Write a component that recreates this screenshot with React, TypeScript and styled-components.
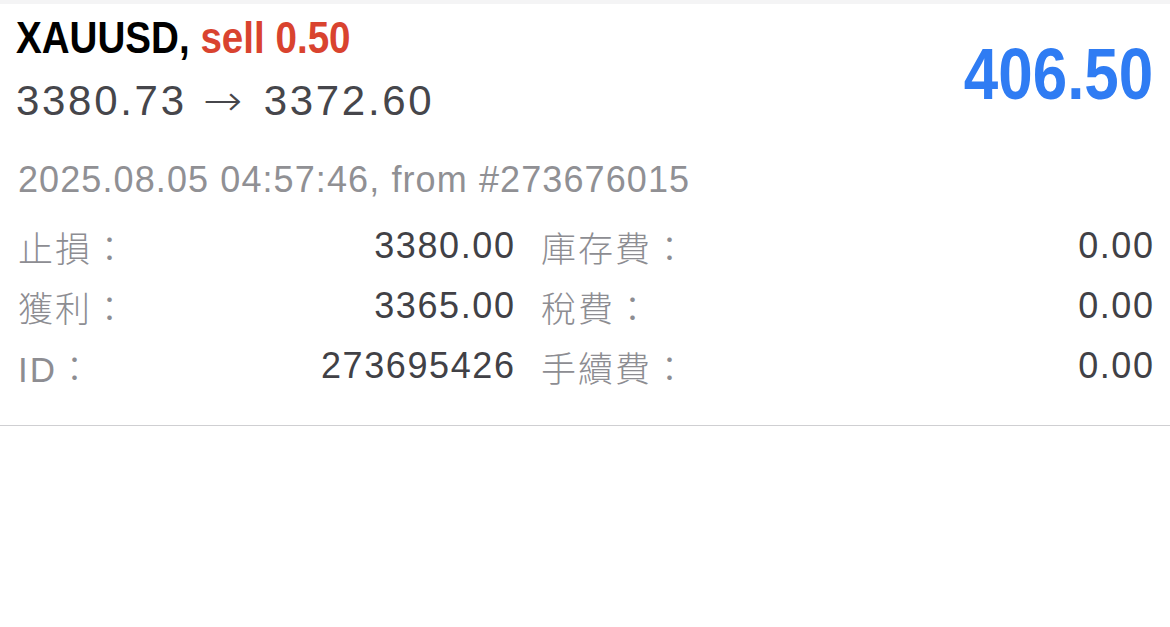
import React from 'react';
import styled, { createGlobalStyle } from 'styled-components';

const GlobalStyle = createGlobalStyle`
  html, body {
    margin: 0;
    padding: 0;
    background: #ffffff;
  }
  body {
    font-family: "Liberation Sans", Arial, "Noto Sans CJK TC", sans-serif;
    -webkit-font-smoothing: antialiased;
  }
`;

const TopStrip = styled.div`
  height: 4px;
  background: #f4f4f5;
`;

const Card = styled.div`
  padding: 0 17px 0 16px;
  border-bottom: 1px solid #cfcfd2;
`;

const Header = styled.div`
  display: flex;
  justify-content: space-between;
  align-items: flex-start;
`;

const TitleBlock = styled.div`
  display: flex;
  flex-direction: column;
`;

// condensed bold face, squeezed from the regular one
const Condensed = styled.div`
  font-family: "Liberation Sans", sans-serif;
  font-weight: 700;
  white-space: nowrap;
  transform-origin: left center;
`;

const Title = styled(Condensed)`
  font-size: 44px;
  line-height: 50px;
  margin-top: 9px;
  color: #000000;
  transform: scaleX(0.877);
`;

const Side = styled.span`
  color: #d9432f;
`;

const Prices = styled.div`
  margin-top: 13px;
  font-size: 42px;
  line-height: 50px;
  color: #46464b;
  letter-spacing: 2.7px;
  white-space: nowrap;
`;

const Arrow = styled.span`
  display: inline-block;
  font-family: "DejaVu Sans", sans-serif;
  font-weight: 300;
  letter-spacing: 0;
  margin: 0 9px 0 4px;
  transform: scaleX(1.12);
`;

const Profit = styled(Condensed)`
  font-size: 72px;
  line-height: 80px;
  margin-top: 30px;
  color: #2f7cf3;
  transform-origin: right center;
  transform: scaleX(0.86);
`;

const Meta = styled.div`
  margin: 33px 0 0 2px;
  font-size: 36px;
  line-height: 42px;
  color: #909094;
  letter-spacing: 1.1px;
  white-space: nowrap;
`;

const Grid = styled.div`
  display: grid;
  grid-template-columns: 496px 1fr;
  margin: 15px 0 29px 2px;
`;

const Cell = styled.div<{ $second?: boolean }>`
  display: flex;
  justify-content: space-between;
  align-items: center;
  height: 60px;
  margin-left: ${(p) => (p.$second ? '27px' : '0')};
`;

const Label = styled.span`
  font-family: "Liberation Sans", "Noto Sans CJK TC", sans-serif;
  font-weight: 300;
  font-size: 35px;
  color: #8d8d92;
  letter-spacing: 2px;
`;

const Value = styled.span`
  font-size: 36px;
  color: #414146;
  letter-spacing: 1.6px;
  margin-right: -1.6px;
`;

const rows = [
  ['止損：', '3380.00', '庫存費：', '0.00'],
  ['獲利：', '3365.00', '稅費：', '0.00'],
  ['ID：', '273695426', '手續費：', '0.00'],
];

export default function App() {
  return (
    <>
      <GlobalStyle />
      <TopStrip />
      <Card>
        <Header>
          <TitleBlock>
            <Title>
              XAUUSD, <Side>sell 0.50</Side>
            </Title>
            <Prices>
              3380.73 <Arrow>→</Arrow> 3372.60
            </Prices>
          </TitleBlock>
          <Profit>406.50</Profit>
        </Header>
        <Meta>2025.08.05 04:57:46, from #273676015</Meta>
        <Grid>
          {rows.map((r) => (
            <React.Fragment key={r[0]}>
              <Cell>
                <Label>{r[0]}</Label>
                <Value>{r[1]}</Value>
              </Cell>
              <Cell $second>
                <Label>{r[2]}</Label>
                <Value>{r[3]}</Value>
              </Cell>
            </React.Fragment>
          ))}
        </Grid>
      </Card>
    </>
  );
}
